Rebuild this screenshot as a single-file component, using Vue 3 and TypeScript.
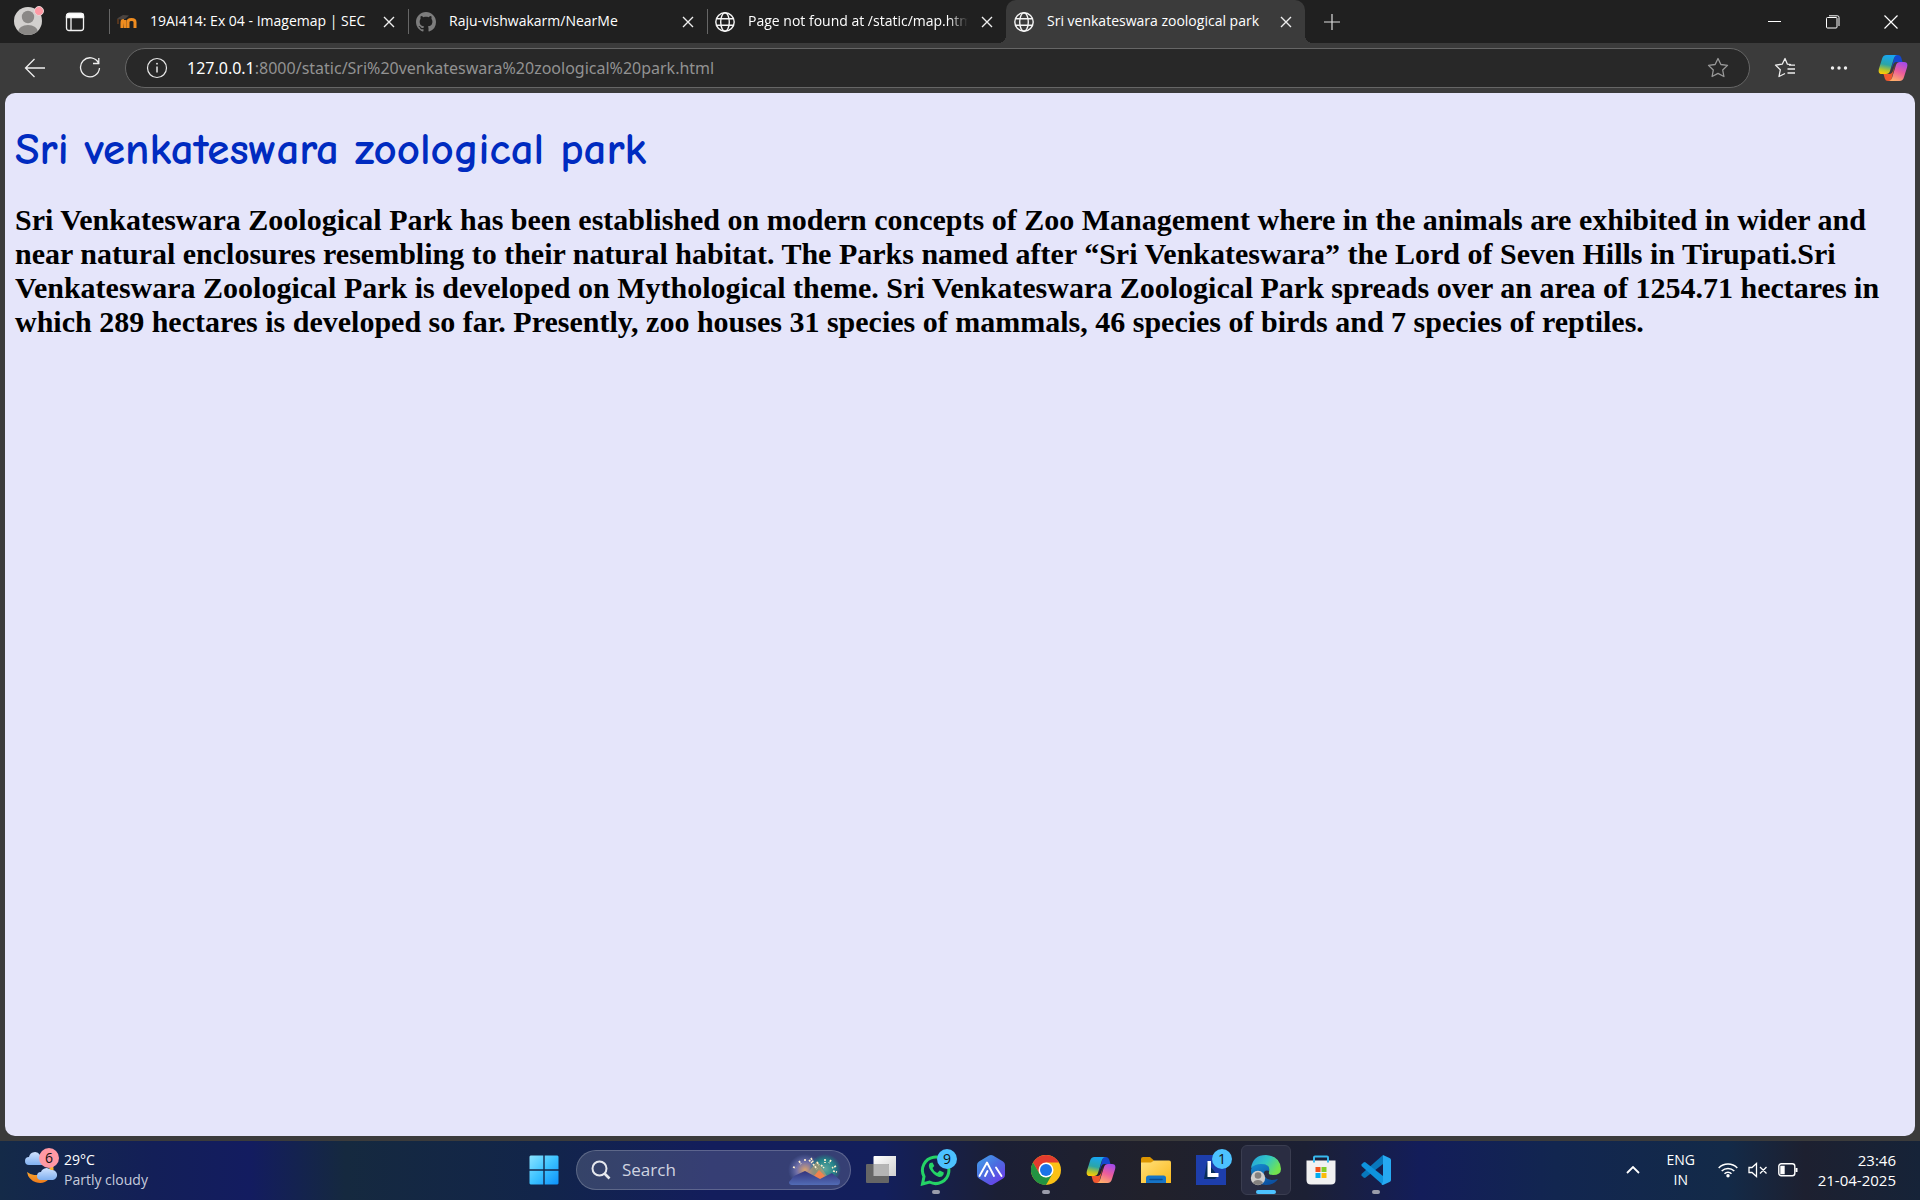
<script setup lang="ts">
interface Tab {
  title: string
  icon: 'moodle' | 'github' | 'globe'
  active?: boolean
  long?: boolean
}

const tabs: Tab[] = [
  { title: '19AI414: Ex 04 - Imagemap | SEC', icon: 'moodle' },
  { title: 'Raju-vishwakarm/NearMe', icon: 'github' },
  { title: 'Page not found at /static/map.html', icon: 'globe', long: true },
  { title: 'Sri venkateswara zoological park', icon: 'globe', active: true },
]
</script>

<template>
  <div class="screen">
    <header class="tabstrip">
      <button class="profile" aria-label="Profile">
        <svg width="30" height="30" viewBox="0 0 30 30">
          <defs><clipPath id="face"><circle cx="14" cy="16" r="14" /></clipPath></defs>
          <circle cx="14" cy="16" r="14" fill="#d2d0ce" />
          <g clip-path="url(#face)" fill="#8a8886"><circle cx="14" cy="12" r="6.200" /><ellipse cx="14" cy="27" rx="10" ry="7" /></g>
          <circle cx="25" cy="6" r="4.500" fill="#ff99a4" stroke="#e9d5d5" stroke-width="1" />
        </svg>
      </button>
      <button class="workspace" aria-label="Tab actions">
        <svg width="20" height="20" viewBox="0 0 20 20" fill="none" stroke="#f3f3f3" stroke-width="1.300">
          <rect x="1.500" y="1.500" width="17" height="17" rx="2.500" /><path d="M6 6v12" /><path d="M1.500 5.500V4a2.500 2.500 0 0 1 2.500-2.500h12A2.500 2.500 0 0 1 18.500 4v1.500z" fill="#fff" />
        </svg>
      </button>
      <nav class="tabs">
        <div v-for="tab in tabs" :key="tab.title" class="tab" :class="{ active: tab.active }">
          <svg v-if="tab.icon === 'moodle'" class="favicon" viewBox="0 0 20 20">
            <path d="M5 16V10.500q0-2.500 2-2.500M11 16v-6q0-2.500 3.500-2.500T18 10v6" fill="none" stroke="#ef8c1f" stroke-width="3" />
            <path d="M5.500 8h4v8h-2.500z" fill="#ef8c1f" />
            <path d="M0 6.500l6-3.500 6 .5-4 3.500-5 .5z" fill="#4a4441" /><path d="M1 7v5" stroke="#8a4b1a" />
          </svg>
          <svg v-else-if="tab.icon === 'github'" class="favicon" viewBox="0 0 16 16">
            <path fill="#7d7d7d" d="M8 0C3.580 0 0 3.580 0 8c0 3.540 2.290 6.530 5.470 7.590.4.070.55-.17.55-.38 0-.19-.01-.82-.01-1.490-2.010.37-2.530-.49-2.690-.94-.09-.23-.48-.94-.82-1.130-.28-.15-.68-.52-.01-.53.63-.01 1.080.58 1.230.82.72 1.210 1.870.87 2.330.66.07-.52.28-.87.51-1.070-1.780-.2-3.640-.89-3.640-3.950 0-.87.31-1.590.82-2.150-.08-.2-.36-1.020.08-2.120 0 0 .67-.21 2.200.82.64-.18 1.320-.27 2-.27s1.360.09 2 .27c1.530-1.040 2.200-.82 2.200-.82.44 1.100.16 1.920.08 2.120.51.56.82 1.270.82 2.150 0 3.070-1.870 3.750-3.650 3.950.29.25.54.73.54 1.480 0 1.070-.01 1.930-.01 2.200 0 .21.15.46.55.38A8.010 8.010 0 0 0 16 8c0-4.420-3.580-8-8-8z" />
          </svg>
          <svg v-else class="favicon" viewBox="0 0 20 20" fill="none" stroke="#f5f5f5" stroke-width="1.400">
            <circle cx="10" cy="10" r="9.200" /><ellipse cx="10" cy="10" rx="4.300" ry="9.200" /><path d="M1.500 6.800h17M1.500 13.200h17" />
          </svg>
          <a class="title" :class="{ long: tab.long }" href="#">{{ tab.title }}</a>
          <button class="close" aria-label="Close tab">
            <svg width="12" height="12" viewBox="0 0 12 12"><path d="M1 1l10 10M11 1L1 11" stroke="#eee" stroke-width="1.400" /></svg>
          </button>
        </div>
      </nav>
      <button class="newtab" aria-label="New tab">
        <svg width="18" height="18" viewBox="0 0 18 18"><path d="M9 1v16M1 9h16" stroke="#ddd" stroke-width="1.200" /></svg>
      </button>
      <div class="controls">
        <button aria-label="Minimize"><svg width="14" height="14" viewBox="0 0 14 14"><path d="M0 6.500h13" stroke="#fff" /></svg></button>
        <button aria-label="Restore"><svg width="14" height="14" viewBox="0 0 14 14" fill="none" stroke="#fff"><rect x=".5" y="2.500" width="10.500" height="10.500" rx="1" /><path d="M3 .8h8.500q1.500 0 1.500 1.500V11" /></svg></button>
        <button aria-label="Close window"><svg width="14" height="14" viewBox="0 0 14 14"><path d="M.5.5l13 13M13.500.5l-13 13" stroke="#fff" stroke-width="1.200" /></svg></button>
      </div>
    </header>

    <div class="toolbar">
      <button class="nav" aria-label="Back">
        <svg width="22" height="20" viewBox="0 0 22 20" fill="none" stroke="#eee" stroke-width="1.300"><path d="M21 10H2M10.500 1L1.500 10l9 9" /></svg>
      </button>
      <button class="nav" aria-label="Refresh">
        <svg width="22" height="22" viewBox="0 0 22 22" fill="none" stroke="#eee" stroke-width="1.300"><path d="M19.500 6A9.500 9.500 0 1 0 20.500 11M19.800 1v5.500h-5.800" /></svg>
      </button>
      <div class="address">
        <svg width="22" height="22" viewBox="0 0 22 22" fill="none" stroke="#e8e8e8" stroke-width="1.200"><circle cx="11" cy="11" r="9.500" /><path d="M11 9.500v6" stroke-width="1.500" /><circle cx="11" cy="6.700" r=".9" fill="#e8e8e8" stroke="none" /></svg>
        <a class="url" href="#"><span class="host">127.0.0.1</span>:8000/static/Sri%20venkateswara%20zoological%20park.html</a>
        <button aria-label="Add to favorites">
          <svg width="22" height="22" viewBox="0 0 22 22" fill="none" stroke="#999" stroke-width="1.300" stroke-linejoin="round"><path d="M11 1.500l2.900 6 6.600.9-4.800 4.600 1.200 6.500L11 16.400l-5.900 3.100L6.300 13 1.500 8.400l6.600-.9z" /></svg>
        </button>
      </div>
      <button class="tool" aria-label="Favorites">
        <svg width="22" height="22" viewBox="0 0 22 22" fill="none" stroke="#eee" stroke-width="1.300" stroke-linejoin="round"><path d="M17 7.700l-3.600-.5L11 1.500 8.200 7.200l-6.700.9 4.800 4.700L5 19.500l6-3M15 8.200h6M13.500 12h7.500M13.500 16h7.500" /></svg>
      </button>
      <button class="tool" aria-label="Settings and more">
        <svg width="20" height="6" viewBox="0 0 20 6" fill="#eee"><circle cx="3.500" cy="3" r="1.700" /><circle cx="10" cy="3" r="1.700" /><circle cx="16.500" cy="3" r="1.700" /></svg>
      </button>
      <button class="tool" aria-label="Copilot"><svg width="30" height="28" viewBox="0 0 30 28"><use href="#copilot" /></svg></button>
    </div>

    <main class="page">
      <h1>Sri venkateswara zoological park</h1>
      <p>Sri Venkateswara Zoological Park has been established on modern concepts of Zoo Management where in the animals are exhibited in wider and near natural enclosures resembling to their natural habitat. The Parks named after “Sri Venkateswara” the Lord of Seven Hills in Tirupati.Sri Venkateswara Zoological Park is developed on Mythological theme. Sri Venkateswara Zoological Park spreads over an area of 1254.71 hectares in which 289 hectares is developed so far. Presently, zoo houses 31 species of mammals, 46 species of birds and 7 species of reptiles.</p>
    </main>

    <footer class="taskbar">
      <button class="weather">
        <svg width="36" height="38" viewBox="0 0 36 38">
          <defs>
            <linearGradient id="cloud" x2="0" y2="1"><stop stop-color="#cfe2ff" /><stop offset="1" stop-color="#80b0f0" /></linearGradient>
            <linearGradient id="moon" x2="0" y2="1"><stop stop-color="#ffc83a" /><stop offset="1" stop-color="#f07c1c" /></linearGradient>
          </defs>
          <path d="M28 17a16 16 0 0 1-25 9a13 13 0 0 0 22 7a13 13 0 0 0 3-16z" fill="url(#moon)" />
          <path d="M5 19a4 4 0 0 1 0-8 6 6 0 0 1 11-2l4 3v7z" fill="url(#cloud)" />
          <path d="M17 34a4 4 0 0 1 0-8 6 6 0 0 1 10-2 5 5 0 0 1 2 10z" fill="url(#cloud)" />
        </svg>
        <span class="badge pink">6</span>
        <span class="weather-text"><span>29°C</span><span class="dim">Partly cloudy</span></span>
      </button>

      <div class="apps">
        <button class="app" aria-label="Start">
          <svg width="30" height="30" viewBox="0 0 30 30">
            <defs><linearGradient id="win" x2="1" y2="1"><stop stop-color="#8be4ff" /><stop offset=".5" stop-color="#3cc2ff" /><stop offset="1" stop-color="#0c91fb" /></linearGradient></defs>
            <path d="M1.500.5H14.300V14.300H.5V1.500zM15.700.5H28.500l1 1V14.300H15.700zM.5 15.700H14.300V29.500H1.500l-1-1zM15.700 15.700H29.500V28.500l-1 1H15.700z" fill="url(#win)" />
          </svg>
        </button>
        <label class="search">
          <svg width="20" height="20" viewBox="0 0 20 20" fill="none" stroke="#e6e8ee" stroke-width="2"><circle cx="8.500" cy="8.500" r="7" /><path d="M13.500 13.500l5 5" stroke-width="2.600" /></svg>
          <input type="text" placeholder="Search" aria-label="Search" />
          <svg width="54" height="32" viewBox="0 0 54 32">
            <defs>
              <radialGradient id="glowA"><stop stop-color="#d9a26e" /><stop offset=".5" stop-color="#7270a8" /><stop offset="1" stop-color="#5668ad" stop-opacity="0" /></radialGradient>
              <radialGradient id="glowB"><stop stop-color="#62a79d" /><stop offset=".6" stop-color="#24858a" /><stop offset="1" stop-color="#1c8584" stop-opacity="0" /></radialGradient>
              <linearGradient id="hill" x2="0" y2="1"><stop stop-color="#33337d" /><stop offset="1" stop-color="#526cb5" /></linearGradient>
            </defs>
            <ellipse cx="18" cy="16" rx="17" ry="16" fill="url(#glowA)" /><ellipse cx="38" cy="15" rx="16" ry="15" fill="url(#glowB)" />
            <path d="M20 20l10-13 10 15-8 5z" fill="#c99a6a" opacity=".6" /><path d="M27 22l5-6 6 6-5 4z" fill="#f0824f" />
            <path d="M2 28l5-6 11-5 15 8 12-6 8 7v2q0 3-3 3H5q-3 0-3-3z" fill="url(#hill)" />
            <path d="M6 13l3 1M12 7l2 3M18 5v3M24 4l2 4M30 8l2 3M34 11l3 3M38 5v4M44 6l-2 3M49 12l-4 2M46 17l4 1M26 10l4 5M22 6l3 3" stroke="#ffeecd" stroke-width="1.700" stroke-dasharray="2 1" />
          </svg>
        </label>
        <button class="app" aria-label="Task view">
          <svg width="30" height="30" viewBox="0 0 30 30"><defs><linearGradient id="tv" x2="1" y2="1"><stop stop-color="#fff" /><stop offset="1" stop-color="#cfcfcf" /></linearGradient></defs><rect x="7.500" y="1" width="23" height="20" rx="1" fill="url(#tv)" /><rect y="9" width="23" height="19" rx="1" fill="#666" /><path d="M7.500 9H22q1 0 1 1v11H7.500z" fill="#b5b5b5" /></svg>
        </button>
        <button class="app running" aria-label="WhatsApp">
          <svg width="32" height="32" viewBox="0 0 32 32" fill="none" stroke="#25d366" stroke-width="3"><path d="M4 22.500A13.200 13.200 0 1 1 9.500 28L2.500 30z" /><path d="M10 9q-2 2-.5 5.500Q13 21 19 23q3 .5 4.500-2.500l.3-2-4-2-2.600 2.500Q13.500 17.500 12.500 14l1.800-2L12.500 8.500z" fill="#25d366" stroke="none" /></svg>
          <span class="badge blue">9</span>
        </button>
        <button class="app" aria-label="Arena">
          <svg width="30" height="32" viewBox="0 0 30 32"><defs><linearGradient id="hex" x2=".8" y2="1"><stop stop-color="#43a6ed" /><stop offset=".5" stop-color="#4a6ee0" /><stop offset="1" stop-color="#6c3be9" /></linearGradient></defs><path d="M13 1.500q2-1 4 0l10 6q2 1 2 3.500v10q0 2.500-2 3.500l-10 6q-2 1-4 0l-10-6Q1 23.500 1 21V11q0-2.500 2-3.500z" fill="url(#hex)" /><path d="M3.500 22L11 8.500 18 22M9 22l2.500-5M20 13.500l5.500 8.500" fill="none" stroke="#fff" stroke-width="1.900" stroke-linejoin="round" stroke-linecap="round" /></svg>
        </button>
        <button class="app running" aria-label="Chrome">
          <svg width="30" height="30" viewBox="0 0 30 30"><circle cx="15" cy="15" r="15" fill="#fbc116" /><path d="M15 0A15 15 0 0 1 28 7.500H15L8.500 18.700 2 7.500A15 15 0 0 1 15 0z" fill="#e33b2e" /><path d="M2 7.500A15 15 0 0 0 15 30L21.500 18.700 15 22.500 8.500 18.700z" fill="#229342" /><circle cx="15" cy="15" r="7.500" fill="#fff" /><circle cx="15" cy="15" r="6" fill="#1a73e8" /></svg>
        </button>
        <button class="app" aria-label="Copilot">
          <svg width="30" height="28" viewBox="0 0 30 28">
            <defs>
              <linearGradient id="cpA" x1=".5" x2=".3" y2="1"><stop stop-color="#18a6f2" /><stop offset=".5" stop-color="#2ba5a7" /><stop offset=".8" stop-color="#b7c52b" /><stop offset="1" stop-color="#ffca05" /></linearGradient>
              <linearGradient id="cpB" x1=".7" x2=".3" y2="1"><stop stop-color="#a54be8" /><stop offset=".5" stop-color="#ed5d9a" /><stop offset="1" stop-color="#ffaf6a" /></linearGradient>
            </defs>
            <g id="copilot">
              <path d="M17 1h3q2.500 0 3.200 2.500L24.500 8H18q-2 0-3 3l-2 5z" fill="#1448cf" />
              <path d="M13 27h-3q-2.500 0-3.200-2.500L5.500 20H12q2 0 3-3l2-6z" fill="#f0582f" />
              <path d="M8.500 1H19q-2 0-3 3l-4 13q-1 3-4 3H4q-4.500 0-3-5.500L4 5q1-4 4.500-4z" fill="url(#cpA)" />
              <path d="M21.500 27H11q2 0 3-3l4-13q1-3 4-3H26q4.500 0 3 5.500L26 23q-1 4-4.500 4z" fill="url(#cpB)" />
            </g>
          </svg>
        </button>
        <button class="app" aria-label="File Explorer">
          <svg width="30" height="28" viewBox="0 0 30 28"><defs><linearGradient id="fold" x2="1" y2="1"><stop stop-color="#ffe07c" /><stop offset="1" stop-color="#fbb91b" /></linearGradient></defs><path d="M0 3q0-2 2-2h7l4 3.500L10 8H0z" fill="#dc9500" /><path d="M0 6.500h10L13 4.500h15q2 0 2 2V27H0z" fill="url(#fold)" /><path d="M5 27v-5q0-2.500 2.500-2.500h15q2.500 0 2.500 2.500v5z" fill="#1674c7" /><path d="M9 23.500h12" stroke="#0a4b91" stroke-width="1.500" stroke-linecap="round" /></svg>
        </button>
        <button class="app" aria-label="L app">
          <svg width="30" height="30" viewBox="0 0 30 30"><path d="M0 0h30v30H0z" fill="#1d3eac" /><path d="M11 7L8 24h11l3-3z" fill="#062c5b" /><path d="M11.500 6H15v12h7.500v4h-11z" fill="#fff" /></svg>
          <span class="badge blue">1</span>
        </button>
        <button class="app current" aria-label="Edge">
          <svg width="32" height="32" viewBox="0 0 32 32">
            <defs>
              <linearGradient id="edA" x2="1" y2=".5"><stop stop-color="#249be0" /><stop offset=".55" stop-color="#32c8c3" /><stop offset="1" stop-color="#73e34d" /></linearGradient>
              <linearGradient id="edB" x2=".6" y2="1"><stop stop-color="#168fd3" /><stop offset="1" stop-color="#0c50a0" /></linearGradient>
            </defs>
            <path d="M1 16Q2 9 11 9q9 1 9 8-7-2-6 4 3 7 14 4Q24 31 16 31 1 30 1 16z" fill="url(#edB)" />
            <path d="M1 14Q3 1 16 1q14 1 15 14 0 6-8 6-5 0-4-3 2-8-8-8-6 0-10 4z" fill="url(#edA)" />
            <circle cx="8" cy="24" r="7.200" fill="#d1cfcd" /><circle cx="8" cy="21.500" r="3.300" fill="#84817f" /><path d="M3 29q1-3 5-3t5 3q-5 4-10 0z" fill="#84817f" />
          </svg>
        </button>
        <button class="app" aria-label="Store">
          <svg width="30" height="30" viewBox="0 0 30 30"><path d="M8 8V2.500q0-1 1-1h12q1 0 1 1V8" fill="none" stroke="#38b9ee" stroke-width="2" /><path d="M.5 5.500h29V25q0 4.500-4.500 4.500H5Q.5 29.500.5 25z" fill="#f1f1f1" /><path d="M9.500 12h5v5h-5z" fill="#f1511b" /><path d="M15.500 12h5v5h-5z" fill="#80cc28" /><path d="M9.500 18h5v5h-5z" fill="#00adef" /><path d="M15.500 18h5v5h-5z" fill="#fbbc09" /><path d="M8 5v2.500M22 5v2.500" stroke="#38b9ee" stroke-width="2" /></svg>
        </button>
        <button class="app running" aria-label="Visual Studio Code">
          <svg width="30" height="30" viewBox="0 0 30 30"><path d="M22 0v9L4 23l-1.500-.5L.5 20.500V19z" fill="#0878bd" /><path d="M22 30v-9L4 7l-1.500.5L.5 9.500V11z" fill="#0e93dd" /><path d="M22 0l6.500 3Q30 3.500 30 5v20q0 1.500-1.500 2L22 30q-1 0-1.500-.8L22 27z" fill="#26a9f2" /></svg>
        </button>
      </div>

      <div class="tray">
        <button class="chevron" aria-label="Show hidden icons"><svg width="14" height="8" viewBox="0 0 14 8" fill="none" stroke="#fff" stroke-width="1.800"><path d="M1 7l6-6 6 6" /></svg></button>
        <button class="lang"><span>ENG</span><span>IN</span></button>
        <button class="status" aria-label="Network, sound and battery">
          <svg width="20" height="16" viewBox="0 0 20 16" fill="none" stroke="#fff" stroke-width="1.500"><path d="M.7 6a13 13 0 0 1 18.600 0M3.700 9a9 9 0 0 1 12.600 0M6.500 11.800a5 5 0 0 1 7 0" /><circle cx="10" cy="13.700" r="1.700" fill="#fff" stroke="none" /></svg>
          <svg width="20" height="16" viewBox="0 0 20 16" fill="none" stroke="#fff" stroke-width="1.300"><path d="M1 5.500h3L8.500 1.500v13L4 10.500H1zM12 5l6.500 6.500M18.500 5L12 11.500" /></svg>
          <svg width="20" height="14" viewBox="0 0 20 14" fill="none" stroke="#fff" stroke-width="1.400"><rect x=".8" y=".8" width="16" height="12" rx="2.500" /><path d="M3 3.500h3v7H3z" fill="#fff" /><path d="M18.500 5v4" stroke-width="2" /></svg>
        </button>
        <button class="clock"><span>23:46</span><span>21-04-2025</span></button>
      </div>
    </footer>
  </div>
</template>

<style>
body {
  margin: 0;
}
</style>

<style scoped>
.screen {
  display: flex;
  flex-direction: column;
  min-height: 100vh;
  background: #3b3b3b;
  color: #fff;
  font-family: "Segoe UI", "Open Sans", "Noto Sans", sans-serif;
}
button {
  display: flex;
  align-items: center;
  justify-content: center;
  flex: none;
  margin: 0;
  padding: 0;
  border: 0;
  background: none;
  color: inherit;
  font: inherit;
}
a {
  color: inherit;
  text-decoration: none;
}
svg {
  display: block;
  flex: none;
}

.tabstrip {
  display: flex;
  height: 43px;
  background: #202020;
}
.profile {
  width: 30px;
  margin-left: 14px;
  padding-bottom: 4px;
}
.workspace {
  width: 20px;
  margin: 0 24px 0 21px;
}
.tabs {
  display: flex;
  flex: 0 1 1196px;
  min-width: 0;
}
.tab {
  position: relative;
  display: flex;
  align-items: center;
  flex: 1 1 0;
  box-sizing: border-box;
  min-width: 0;
  padding: 0 11px 0 8px;
}
.tab:not(.active)::before {
  content: "";
  position: absolute;
  left: 0;
  top: 9px;
  width: 1px;
  height: 25px;
  background: #666;
}
.tab.active {
  border-radius: 10px 10px 0 0;
  background: #3b3b3b;
}
.tab.active::before,
.tab.active::after {
  content: "";
  position: absolute;
  bottom: 0;
  width: 8px;
  height: 8px;
}
.tab.active::before {
  right: 100%;
  background: radial-gradient(circle at 0 0, #202020 8px, #3b3b3b 8px);
}
.tab.active::after {
  left: 100%;
  background: radial-gradient(circle at 100% 0, #202020 8px, #3b3b3b 8px);
}
.favicon {
  width: 20px;
  height: 20px;
}
.title {
  flex: 1;
  margin: 0 11px 0 13px;
  padding-bottom: 2px;
  overflow: hidden;
  font-size: 14px;
  line-height: 20px;
  white-space: nowrap;
}
.title.long {
  mask-image: linear-gradient(to left, transparent, #000 20px);
}
.close {
  width: 16px;
  height: 20px;
}
.newtab {
  width: 18px;
  margin-left: 18px;
}
.controls {
  display: flex;
  margin-left: auto;
}
.controls button {
  width: 58px;
}

.toolbar {
  display: flex;
  align-items: center;
  height: 50px;
}
.nav {
  width: 22px;
  margin-left: 24px;
}
.nav + .nav {
  margin-left: 33px;
}
.address {
  display: flex;
  align-items: center;
  flex: 1;
  box-sizing: border-box;
  height: 40px;
  margin-left: 24px;
  padding: 0 20px;
  border: 1px solid #666;
  border-radius: 20px;
  background: #282828;
}
.url {
  flex: 1;
  margin-left: 19px;
  color: #929292;
  font-family: "Segoe UI", "Noto Sans", sans-serif;
  font-size: 16px;
  line-height: 24px;
}
.host {
  color: #fff;
}
.tool {
  width: 54px;
}
.address + .tool {
  margin-left: 8px;
}

.page {
  flex: 1;
  margin: 0 5px 5px;
  padding: 0 10px;
  border-radius: 10px;
  background: #e5e5fa;
  color: #000;
}
.page h1 {
  margin: 28px 0 26px;
  color: #002bc0;
  font: bold 45px/56px "Comic Sans MS", "Comic Neue", "Noto Sans", sans-serif;
}
.page p {
  margin: 0;
  font: bold 30px/34px "Liberation Serif", "Times New Roman", serif;
}

.taskbar {
  display: grid;
  grid-template-columns: 1fr auto 1fr;
  box-sizing: border-box;
  height: 59px;
  padding-bottom: 1px;
  background: linear-gradient(90deg, #142a48 0, #131f58 8%, #131c60 13%, #15293f 18%, #12254a 28%, #131d5c 37%, #131f5c 46%, #1b1f35 52%, #21212b 60%, #1c2034 68%, #131d5a 74%, #122650 81%, #132a48 90%, #1d2030 94%, #162338 100%);
  font-size: 14px;
  line-height: 20px;
}
.badge {
  position: absolute;
  width: 20px;
  height: 20px;
  border-radius: 10px;
  color: #111;
  font-size: 14px;
  line-height: 20px;
  text-align: center;
}
.pink {
  left: 15px;
  top: 7px;
  background: #ff99a4;
}
.blue {
  right: 4px;
  top: 4px;
  background: #4cc2ff;
}
.weather {
  position: relative;
  justify-self: start;
  align-items: flex-start;
  margin-left: 24px;
}
.weather svg {
  margin-top: 5px;
}
.weather-text,
.lang,
.clock {
  display: flex;
  flex-direction: column;
}
.weather-text {
  align-items: flex-start;
  margin: 9px 0 0 4px;
}
.dim {
  color: #c6cbdc;
}
.apps {
  display: flex;
  align-items: center;
}
.app {
  position: relative;
  box-sizing: border-box;
  width: 50px;
  height: 50px;
  margin-right: 5px;
  border-radius: 6px;
}
.app:last-child {
  margin-right: 0;
}
.current {
  border: 1px solid #3a3d50;
  background: #2a2d42;
}
.running::after,
.current::after {
  content: "";
  position: absolute;
  bottom: 1px;
  width: 8px;
  height: 4px;
  border-radius: 2px;
  background: #9a9cab;
}
.current::after {
  bottom: 0;
  width: 20px;
  background: #4cc2ff;
}
.search {
  display: flex;
  align-items: center;
  box-sizing: border-box;
  width: 275px;
  height: 40px;
  margin: 0 5px 0 2px;
  padding: 0 9px 0 14px;
  border: 1px solid #ffffff33;
  border-radius: 20px;
  background: #ffffff26;
}
.search input {
  flex: 1;
  min-width: 0;
  padding: 0 0 0 11px;
  border: 0;
  outline: 0;
  background: none;
  color: #fff;
  font: inherit;
  font-size: 17px;
}
.search input::placeholder {
  color: #d0d4e0;
  opacity: 1;
}
.tray {
  display: flex;
  justify-self: end;
  padding-right: 24px;
}
.chevron {
  width: 14px;
  margin-right: 26px;
}
.lang {
  width: 30px;
  margin-right: 22px;
}
.status {
  gap: 10px;
  margin-right: 20px;
}
.clock {
  align-items: flex-end;
  font-size: 15px;
}
</style>
